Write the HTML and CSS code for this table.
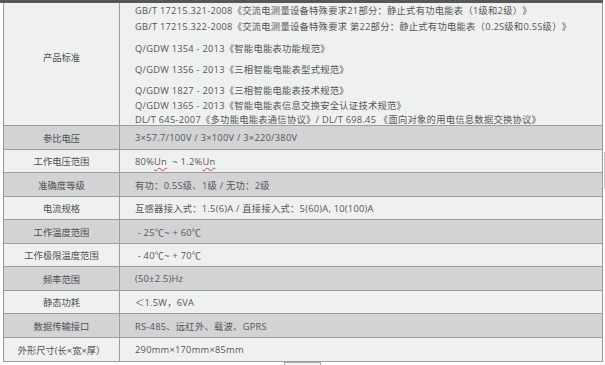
FILE: index.html
```html
<!DOCTYPE html>
<html lang="zh-CN">
<head>
<meta charset="utf-8">
<title>技术参数</title>
<link rel="stylesheet" href="styles.css">
</head>
<body>
<div class="topbar"></div>
<div class="sheet">
  <div class="row light first">
    <div class="label label-std">产品标准</div>
    <div class="value std">
      <div class="ln l1">GB/T 17215.321-2008《交流电测量设备特殊要求21部分：静止式有功电能表（1级和2级）》</div>
      <div class="ln l2">GB/T 17215.322-2008《交流电测量设备特殊要求 第22部分：静止式有功电能表（0.2S级和0.5S级）》</div>
      <div class="ln l3">Q/GDW 1354 - 2013《智能电能表功能规范》</div>
      <div class="ln l4">Q/GDW 1356 - 2013《三相智能电能表型式规范》</div>
      <div class="ln l5">Q/GDW 1827 - 2013《三相智能电能表技术规范》</div>
      <div class="ln l6">Q/GDW 1365 - 2013《智能电能表信息交换安全认证技术规范》</div>
      <div class="ln l7">DL/T 645-2007《多功能电能表通信协议》/ DL/T 698.45 《面向对象的用电信息数据交换协议》</div>
    </div>
  </div>
  <div class="row grey">
    <div class="label">参比电压</div>
    <div class="value">3×57.7/100V / 3×100V / 3×220/380V</div>
  </div>
  <div class="row light">
    <div class="label">工作电压范围</div>
    <div class="value">80%<span class="spell">Un</span>&nbsp; ~ 1.2%<span class="spell">Un</span></div>
  </div>
  <div class="row grey">
    <div class="label">准确度等级</div>
    <div class="value">有功：0.5S级、1级 / 无功：2级</div>
  </div>
  <div class="row light">
    <div class="label">电流规格</div>
    <div class="value">互感器接入式：1.5(6)A / 直接接入式：5(60)A, 10(100)A</div>
  </div>
  <div class="row grey">
    <div class="label">工作温度范围</div>
    <div class="value">&nbsp;- 25℃~ + 60℃</div>
  </div>
  <div class="row light">
    <div class="label">工作极限温度范围</div>
    <div class="value">&nbsp;- 40℃~ + 70℃</div>
  </div>
  <div class="row grey">
    <div class="label">频率范围</div>
    <div class="value">(50±2.5)Hz</div>
  </div>
  <div class="row light">
    <div class="label">静态功耗</div>
    <div class="value">＜1.5W，6VA</div>
  </div>
  <div class="row grey">
    <div class="label">数据传输接口</div>
    <div class="value">RS-485、远红外、载波、GPRS</div>
  </div>
  <div class="row light last">
    <div class="label">外形尺寸(长×宽×厚）</div>
    <div class="value">290mm×170mm×85mm</div>
  </div>
</div>
<div class="stub"></div>
<div class="edge-mark"></div>
</body>
</html>
```
FILE: styles.css
```css
html, body {
  margin: 0;
  padding: 0;
  background: #ffffff;
}

body {
  width: 605px;
  height: 365px;
  overflow: hidden;
  position: relative;
  font-family: "Open Sans", "Noto Sans CJK SC", sans-serif;
  font-size: 9.3px;
  color: #555555;
  text-spacing-trim: space-all;
}

.topbar {
  width: 603px;
  height: 3px;
  background: #575757;
}

.sheet {
  box-sizing: border-box;
  width: 600px;
  margin-left: 3px;
  border-left: 1px solid #999999;
  border-right: 1px solid #999999;
}

.row {
  display: grid;
  grid-template-columns: 116px 1fr;
  height: 24px;
  box-sizing: border-box;
  border-bottom: 1px solid #9d9d9d;
}

.row.light {
  background: #eff1f0;
  height: 23px;
}

.row.grey {
  background: #d2d3d5;
  height: 24px;
}

.row.first {
  height: 123px;
}

.row.last {
  height: 24px;
}

.label {
  box-sizing: border-box;
  border-right: 1px solid #9d9d9d;
  display: flex;
  align-items: center;
  justify-content: center;
  color: #4f4f4f;
  white-space: nowrap;
}

.label-std {
  padding-bottom: 14px;
}

.value {
  display: flex;
  align-items: center;
  padding-left: 15px;
  white-space: nowrap;
  letter-spacing: 0.25px;
}

.value.std {
  display: block;
  padding-top: 2px;
}

.ln {
  line-height: 11px;
  height: 11px;
}

.l2 { margin-top: 5px; }
.l3 { margin-top: 11px; }
.l4 { margin-top: 10px; }
.l5 { margin-top: 10px; }
.l6 { margin-top: 4px; }
.l7 { margin-top: 3px; }

.spell {
  text-decoration: underline wavy #e0302a;
  text-decoration-thickness: 1px;
  text-underline-offset: 2px;
}

.stub {
  box-sizing: border-box;
  width: 37px;
  height: 10px;
  margin-left: 284px;
  border: 1px solid #aaaaaa;
  border-bottom: none;
  background: #f0f1f0;
}

.edge-mark {
  position: absolute;
  left: 604px;
  top: 152px;
  width: 2px;
  height: 36px;
  box-sizing: border-box;
  border-left: 1px solid #c4c4c4;
  border-top: 1px solid #9a9a9a;
  border-bottom: 1px solid #9a9a9a;
}
```
